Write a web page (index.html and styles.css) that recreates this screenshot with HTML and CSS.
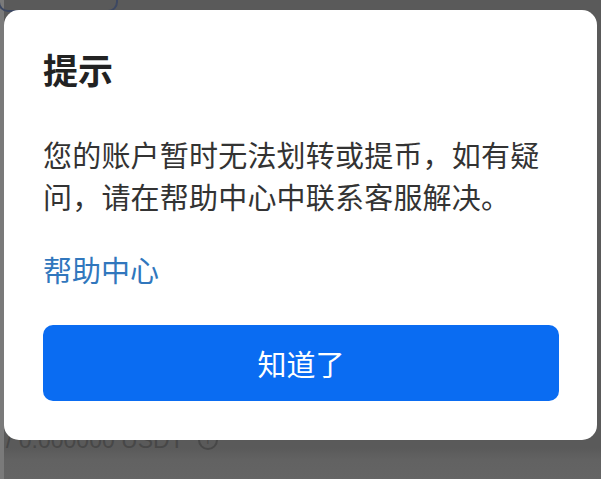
FILE: index.html
```html
<!DOCTYPE html>
<html lang="zh-CN">
<head>
<meta charset="utf-8">
<title>提示</title>
<link rel="stylesheet" href="styles.css">
</head>
<body>
<div class="page">
  <div class="strip"></div>
  <div class="page-main">
    <div class="bg-card"></div>
    <div class="bg-balance">/ 0.000000 USDT <span class="bg-info">i</span></div>
  </div>
</div>
<div class="overlay">
  <div class="dialog">
    <h1 class="dialog-title">提示</h1>
    <p class="dialog-text">您的账户暂时无法划转或提币，如有疑问，请在帮助中心中联系客服解决。</p>
    <a class="dialog-link" href="#">帮助中心</a>
    <button class="dialog-btn" type="button">知道了</button>
  </div>
</div>
</body>
</html>
```
FILE: styles.css
```css
html, body {
  margin: 0;
  padding: 0;
  height: 100%;
}
body {
  background: #5c5c5c;
  font-family: "Noto Sans CJK SC", "Noto Sans", sans-serif;
  overflow: hidden;
}
.page {
  display: flex;
  height: 100%;
}
.strip {
  width: 4px;
  background: #7a7a7a;
  flex: none;
}
.page-main {
  flex: 1;
  display: flex;
  flex-direction: column;
  background: linear-gradient(#5a5a5a 0, #5a5a5a 448px, #626262 460px, #646464 100%);
}
.bg-card {
  width: 116px;
  height: 26px;
  margin-top: -18px;
  margin-left: -6px;
  border: 2px solid #3d4862;
  border-radius: 10px;
}
.bg-balance {
  margin-top: 418px;
  margin-left: 2px;
  font-size: 23px;
  line-height: 20px;
  color: #474747;
  font-family: "Liberation Sans", sans-serif;
  display: flex;
  align-items: center;
  gap: 8px;
}
.bg-info {
  width: 16px;
  height: 16px;
  border: 2px solid #474747;
  border-radius: 50%;
  font-size: 12px;
  line-height: 16px;
  text-align: center;
  margin-left: 6px;
}
.overlay {
  position: fixed;
  inset: 0;
}
.dialog {
  position: absolute;
  left: 4px;
  top: 10px;
  width: 593px;
  height: 430px;
  box-sizing: border-box;
  background: #fff;
  border-radius: 15px;
  padding: 37px 38px 0 39px;
  display: flex;
  flex-direction: column;
  align-items: flex-start;
}
.dialog-title {
  margin: 0;
  font-size: 35px;
  line-height: 44px;
  font-weight: 700;
  color: #222;
}
.dialog-text {
  margin: 42px 0 0;
  font-size: 29px;
  line-height: 42px;
  color: #333;
  letter-spacing: 0.2px;
}
.dialog-link {
  margin-top: 31px;
  font-size: 29px;
  line-height: 42px;
  color: #3177bd;
  text-decoration: none;
}
.dialog-btn {
  margin-top: 35px;
  align-self: stretch;
  height: 76px;
  border: none;
  border-radius: 10px;
  background: #0a6cf2;
  color: #fff;
  font-family: "Noto Sans CJK SC", "Noto Sans", sans-serif;
  font-size: 29px;
  padding: 0;
}
```
